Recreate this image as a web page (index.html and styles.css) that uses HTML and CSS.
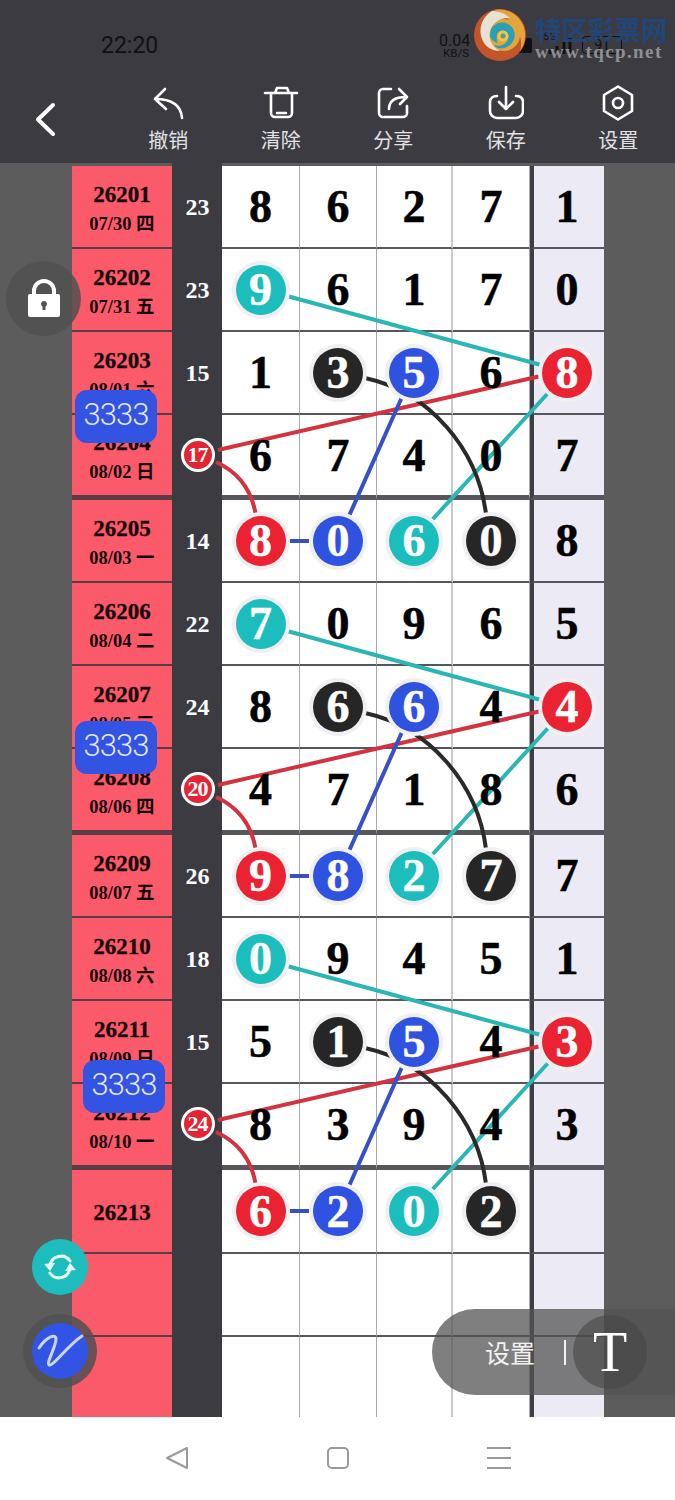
FILE: index.html
```html
<!DOCTYPE html>
<html>
<head>
    <title>走势图</title>
    <link rel="stylesheet" href="styles.css">
</head>
<body>
<div class="screen">
    <!-- status bar + toolbar -->
    <header class="top">
        <div class="status">
            <span class="time">22:20</span>
            <span class="speed">0.04<small>KB/S</small></span>
            <span class="hd"></span>
            <span class="net">5G</span>
            <svg class="bars" viewBox="0 0 24 16"><path d="M2 16V11M9 16V8M16 16V4M22 16V0"/></svg>
            <span class="battery">91</span>
        </div>
        <nav class="toolbar">
            <svg class="back" viewBox="0 0 24 36"><path d="M20 4L5 18.500L20 33"/></svg>
            <div class="tool">
                <svg viewBox="0 0 36 36"><path d="M5 14L15 4M5 14L16 24M5 14C22 14 31 20 32 33"/></svg>
                <span>撤销</span>
            </div>
            <div class="tool">
                <svg viewBox="0 0 36 36"><path d="M2 8H34M12 8L14 3H24L26 8M8 8V28a4 4 0 0 0 4 4H25a4 4 0 0 0 4-4V8M14 28H23"/></svg>
                <span>清除</span>
            </div>
            <div class="tool">
                <svg viewBox="0 0 36 36"><path d="M16 4H8a4 4 0 0 0-4 4V28a4 4 0 0 0 4 4H28a4 4 0 0 0 4-4V21M14 24C14 16 19 12 31 12M24 4L32 12L25 19"/></svg>
                <span>分享</span>
            </div>
            <div class="tool">
                <svg viewBox="0 0 36 36"><path d="M9 11C5 11 2 13 2 17V26a7 7 0 0 0 7 7H28a7 7 0 0 0 7-7V17C35 13 32 11 28 11M18 2V23M11 17L18 24L25 17"/></svg>
                <span>保存</span>
            </div>
            <div class="tool">
                <svg viewBox="0 0 36 36"><path d="M18 1.500L32 10V26L18 34.500L4 26V10Z"/><circle cx="18" cy="18" r="5"/></svg>
                <span>设置</span>
            </div>
        </nav>
    </header>

    <!-- site watermark -->
    <div class="mark">
        <svg class="mark-logo" viewBox="0 0 52 52">
            <circle cx="26" cy="26" r="26" fill="#c4552b"/>
            <circle cx="30" cy="26" r="16" fill="#e2a63a"/>
            <path d="M20 1A26 26 0 0 1 46 42C50 30 44 12 20 1Z" fill="#e5a53a"/>
            <path d="M18 2C8 8 4 20 8 30C11 38 18 42 26 42C18 38 14 30 16 22C18 14 26 8 36 9C30 4 24 2 18 2Z" fill="#e9e2d2"/>
            <path d="M16 26C16 16 26 11 34 15C42 19 43 30 36 36C30 41 22 40 20 36C26 38 32 36 34 30C36 24 30 20 26 22C22 24 22 30 24 34C20 33 16 30 16 26Z" fill="#2a9fb8"/>
            <circle cx="29" cy="27" r="5.500" fill="#e8c84a"/>
            <circle cx="29" cy="27" r="2.500" fill="#7a8a8a"/>
        </svg>
        <div class="mark-text">
            <b>特区彩票网</b>
            <span>www.tqcp.net</span>
        </div>
    </div>

    <!-- the chart -->
    <main class="board">
        <div class="row">
            <div class="issue"><b>26201</b><small>07/30 四</small></div>
            <div class="sum">23</div>
            <div class="cell"><span>8</span></div><div class="cell"><span>6</span></div><div class="cell"><span>2</span></div><div class="cell"><span>7</span></div>
            <div class="cell tail"><span>1</span></div>
        </div>
        <div class="row">
            <div class="issue"><b>26202</b><small>07/31 五</small></div>
            <div class="sum">23</div>
            <div class="cell"><i class="ball teal">9</i></div><div class="cell"><span>6</span></div><div class="cell"><span>1</span></div><div class="cell"><span>7</span></div>
            <div class="cell tail"><span>0</span></div>
        </div>
        <div class="row">
            <div class="issue"><b>26203</b><small>08/01 六</small></div>
            <div class="sum">15</div>
            <div class="cell"><span>1</span></div><div class="cell"><i class="ball black">3</i></div><div class="cell"><i class="ball blue">5</i></div><div class="cell"><span>6</span></div>
            <div class="cell tail"><i class="ball red">8</i></div>
        </div>
        <div class="row end first">
            <div class="issue"><b>26204</b><small>08/02 日</small></div>
            <div class="sum"><i class="tiny">17</i></div>
            <div class="cell"><span>6</span></div><div class="cell"><span>7</span></div><div class="cell"><span>4</span></div><div class="cell"><span>0</span></div>
            <div class="cell tail"><span>7</span></div>
        </div>

        <div class="row">
            <div class="issue"><b>26205</b><small>08/03 一</small></div>
            <div class="sum">14</div>
            <div class="cell"><i class="ball red">8</i></div><div class="cell"><i class="ball blue">0</i></div><div class="cell"><i class="ball teal">6</i></div><div class="cell"><i class="ball black">0</i></div>
            <div class="cell tail"><span>8</span></div>
        </div>
        <div class="row">
            <div class="issue"><b>26206</b><small>08/04 二</small></div>
            <div class="sum">22</div>
            <div class="cell"><i class="ball teal">7</i></div><div class="cell"><span>0</span></div><div class="cell"><span>9</span></div><div class="cell"><span>6</span></div>
            <div class="cell tail"><span>5</span></div>
        </div>
        <div class="row">
            <div class="issue"><b>26207</b><small>08/05 三</small></div>
            <div class="sum">24</div>
            <div class="cell"><span>8</span></div><div class="cell"><i class="ball black">6</i></div><div class="cell"><i class="ball blue">6</i></div><div class="cell"><span>4</span></div>
            <div class="cell tail"><i class="ball red">4</i></div>
        </div>
        <div class="row end">
            <div class="issue"><b>26208</b><small>08/06 四</small></div>
            <div class="sum"><i class="tiny">20</i></div>
            <div class="cell"><span>4</span></div><div class="cell"><span>7</span></div><div class="cell"><span>1</span></div><div class="cell"><span>8</span></div>
            <div class="cell tail"><span>6</span></div>
        </div>

        <div class="row">
            <div class="issue"><b>26209</b><small>08/07 五</small></div>
            <div class="sum">26</div>
            <div class="cell"><i class="ball red">9</i></div><div class="cell"><i class="ball blue">8</i></div><div class="cell"><i class="ball teal">2</i></div><div class="cell"><i class="ball black">7</i></div>
            <div class="cell tail"><span>7</span></div>
        </div>
        <div class="row">
            <div class="issue"><b>26210</b><small>08/08 六</small></div>
            <div class="sum">18</div>
            <div class="cell"><i class="ball teal">0</i></div><div class="cell"><span>9</span></div><div class="cell"><span>4</span></div><div class="cell"><span>5</span></div>
            <div class="cell tail"><span>1</span></div>
        </div>
        <div class="row">
            <div class="issue"><b>26211</b><small>08/09 日</small></div>
            <div class="sum">15</div>
            <div class="cell"><span>5</span></div><div class="cell"><i class="ball black">1</i></div><div class="cell"><i class="ball blue">5</i></div><div class="cell"><span>4</span></div>
            <div class="cell tail"><i class="ball red">3</i></div>
        </div>
        <div class="row end">
            <div class="issue"><b>26212</b><small>08/10 一</small></div>
            <div class="sum"><i class="tiny">24</i></div>
            <div class="cell"><span>8</span></div><div class="cell"><span>3</span></div><div class="cell"><span>9</span></div><div class="cell"><span>4</span></div>
            <div class="cell tail"><span>3</span></div>
        </div>

        <div class="row tall">
            <div class="issue"><b>26213</b></div>
            <div class="sum"></div>
            <div class="cell"><i class="ball red">6</i></div><div class="cell"><i class="ball blue">2</i></div><div class="cell"><i class="ball teal">0</i></div><div class="cell"><i class="ball black">2</i></div>
            <div class="cell tail"></div>
        </div>
        <div class="row">
            <div class="issue"></div>
            <div class="sum"></div>
            <div class="cell"></div><div class="cell"></div><div class="cell"></div><div class="cell"></div>
            <div class="cell tail"></div>
        </div>
        <div class="row last">
            <div class="issue"></div>
            <div class="sum"></div>
            <div class="cell"></div><div class="cell"></div><div class="cell"></div><div class="cell"></div>
            <div class="cell tail"></div>
        </div>

        <!-- links between balls, same shape for every block -->
        <svg class="links" viewBox="0 163 675 1254">
            <defs>
                <g id="block">
                    <path class="l-teal" d="M287 296L541 365M549 392L432 520"/>
                    <path class="l-red" d="M218 450L541 376M216 462C238 472 252 490 256 516"/>
                    <path class="l-black" d="M365 378C430 392 478 450 486 514"/>
                    <path class="l-blue" d="M402 397L349 516M289 541H309"/>
                </g>
            </defs>
            <use href="#block"/>
            <use href="#block" y="335"/>
            <use href="#block" y="670"/>
        </svg>
    </main>

    <footer class="navbar">
        <div class="nav-item"><svg viewBox="0 0 24 24"><path d="M22 2V22L2 12Z"/></svg></div>
        <div class="nav-item"><svg viewBox="0 0 24 24"><rect x="2" y="2" width="20" height="20" rx="4"/></svg></div>
        <div class="nav-item"><svg viewBox="0 0 24 24"><path d="M0 2H24M0 12H24M0 22H24"/></svg></div>
    </footer>

    <!-- floating stuff over the chart -->
    <div class="badge b1">3333</div>
    <div class="badge b2">3333</div>
    <div class="badge b3">3333</div>

    <div class="lock">
        <svg viewBox="0 0 34 40"><path class="shackle" d="M7 18V12a10 10 0 0 1 20 0V18"/><path class="lock-body" fill-rule="evenodd" d="M3 15H31a2 2 0 0 1 2 2V36a2 2 0 0 1-2 2H3a2 2 0 0 1-2-2V17a2 2 0 0 1 2-2ZM17 22a3 3 0 0 0-1.500 5.600V31h3V27.600A3 3 0 0 0 17 22Z"/></svg>
    </div>

    <div class="fab refresh">
        <svg viewBox="0 0 56 56"><path d="M18 27A11 11 0 0 1 38 22M38 29A11 11 0 0 1 18 34"/><path class="head" d="M12 25L23 24L18 32ZM44 31L33 32L38 24Z"/></svg>
    </div>
    <div class="pen-ring">
        <div class="fab pen">
            <svg viewBox="0 0 56 56"><path d="M7 25C14 14 24 10 24 16C24 24 14 40 17 42C21 44 36 22 50 13"/></svg>
        </div>
    </div>

    <div class="pill">
        <span class="pill-label">设置</span>
        <i class="pill-sep"></i>
        <span class="pill-t">T</span>
    </div>
</div>
</body>
</html>
```
FILE: styles.css
```css
* {
    box-sizing: border-box;
}
body {
    margin: 0;
    font-family: "Liberation Serif", serif;
}
.screen {
    position: relative;
    width: 675px;
    height: 1500px;
    overflow: hidden;
    display: flex;
    flex-direction: column;
    background-color: #fff;
}

/* header */
.top {
    height: 163px;
    background-color: #3c3b42;
    font-family: Roboto, sans-serif;
}
.status {
    height: 84px;
    padding-top: 33px;
    padding-left: 101px;
    display: flex;
    align-items: flex-start;
    color: #111;
}
.time {
    font-size: 23px;
    line-height: 26px;
    width: 338px;
}
.speed {
    font-size: 16px;
    line-height: 13px;
    width: 79px;
    padding-top: 1px;
}
.speed small {
    display: block;
    font-size: 11.500px;
    line-height: 12px;
    padding-left: 4px;
}
.hd {
    width: 14px;
    height: 15px;
    margin: 5px 11px 0 0;
    background-color: #111;
    border-radius: 2px;
}
.net {
    width: 16px;
    margin-top: -3px;
    font-size: 11px;
}
.bars {
    width: 24px;
    height: 16px;
    margin: 5px 0 0 -11px;
    fill: none;
    stroke: #111;
    stroke-width: 3;
}
.battery {
    width: 40px;
    height: 18px;
    margin: 3px 0 0 10px;
    border: 1px solid #111;
    border-radius: 4px;
    font-size: 14px;
    line-height: 16px;
    text-align: center;
}
.toolbar {
    position: relative;
    display: flex;
    padding-left: 112px;
}
.back {
    position: absolute;
    left: 33px;
    top: 17px;
    width: 24px;
    height: 36px;
    fill: none;
    stroke: #fff;
    stroke-width: 4;
    stroke-linecap: round;
    stroke-linejoin: round;
}
.tool {
    width: 112.500px;
    display: flex;
    flex-direction: column;
    align-items: center;
    color: #e2e2e2;
    font-family: "Noto Sans CJK SC", sans-serif;
    font-size: 20px;
    line-height: 24px;
}
.tool svg {
    width: 36px;
    height: 36px;
    margin-top: 1px;
    margin-bottom: 7px;
    fill: none;
    stroke: #fff;
    stroke-width: 2.600;
    stroke-linecap: round;
    stroke-linejoin: round;
}

/* watermark */
.mark {
    position: absolute;
    left: 474px;
    top: 9px;
    display: flex;
    gap: 9px;
}
.mark-logo {
    width: 52px;
    height: 52px;
}
.mark-text b {
    display: block;
    margin-top: 6px;
    font-family: "Noto Sans CJK SC", sans-serif;
    font-size: 26.500px;
    line-height: 28px;
    color: rgba(30, 72, 128, 0.9);
}
.mark-text span {
    display: block;
    font-size: 19px;
    line-height: 18px;
    font-weight: bold;
    letter-spacing: 1.400px;
    color: #8f8f92;
    white-space: nowrap;
}

/* chart */
.board {
    position: relative;
    flex: 1;
    padding-top: 3px;
    background: linear-gradient(90deg, #5c5c5c 172px, #3c3b42 172px, #3c3b42 222px, #5c5c5c 222px);
}
.row {
    display: grid;
    grid-template-columns: 100px 50px 78px 77px 76px 77px 74px;
    height: 83px;
    margin-left: 72px;
    width: 532px;
    --line: 2px;
}
.row.end {
    height: 86px;
    --line: 5px;
}
.row.end.first {
    height: 85px;
}
.row.tall {
    height: 84px;
}
.row.last {
    height: 80px;
    --line: 0;
}
.issue {
    display: flex;
    flex-direction: column;
    align-items: center;
    justify-content: center;
    gap: 5px;
    padding-top: 3px;
    background-color: #fb5a6b;
    border-bottom: var(--line) solid #5b3b45;
    color: #16060a;
}
.issue b {
    font-size: 23px;
    line-height: 26px;
    -webkit-text-stroke: 0.3px #16060a;
}
.issue small {
    font-size: 18.500px;
    line-height: 22px;
    font-weight: bold;
    font-family: "Liberation Serif", "Noto Sans CJK SC", serif;
}
.sum {
    display: flex;
    align-items: center;
    justify-content: center;
    padding-left: 1px;
    color: #fff;
    font-size: 24px;
    font-weight: bold;
}
.cell {
    display: flex;
    align-items: center;
    justify-content: center;
    background-color: #fff;
    border-bottom: var(--line) solid #56565c;
    border-right: 1px solid #aaa;
    color: #000;
    font-size: 46px;
    font-weight: bold;
    -webkit-text-stroke: 0.5px currentColor;
}
.cell:nth-child(5) {
    border-right: 2px solid #c9c9c9;
}
.cell span {
    position: relative;
    z-index: 2;
}
.cell.tail {
    padding-right: 4px;
    background-color: #ecebf5;
    border-left: 4px solid #3f3e45;
    border-right: none;
}
.ball {
    position: relative;
    z-index: 2;
    width: 50px;
    height: 50px;
    flex: none;
    display: flex;
    align-items: center;
    justify-content: center;
    border-radius: 50%;
    box-shadow: 0 0 0 4px #f0f0f2;
    color: #fff;
    font-style: normal;
}
.teal { background-color: #1bbdbd; }
.red { background-color: #ea2232; }
.blue { background-color: #2f52e0; }
.black { background-color: #262626; }
.tiny {
    position: relative;
    z-index: 2;
    width: 34px;
    height: 34px;
    margin-bottom: 6px;
    display: flex;
    align-items: center;
    justify-content: center;
    border-radius: 50%;
    border: 3px solid #fff;
    background-color: #e32433;
    font-size: 22px;
    font-style: normal;
    letter-spacing: -1px;
}
.links {
    position: absolute;
    left: 0;
    top: 0;
    width: 675px;
    height: 1254px;
    z-index: 1;
    fill: none;
    stroke-width: 4;
}
.l-teal { stroke: #2bb6b6; }
.l-red { stroke: #d2333f; }
.l-black { stroke: #2a2a2a; }
.l-blue { stroke: #3750c8; }

/* bottom nav */
.navbar {
    height: 83px;
    display: flex;
    justify-content: center;
    padding-top: 29px;
    background-color: #fff;
}
.nav-item {
    width: 161px;
    text-align: center;
}
.nav-item svg {
    width: 24px;
    height: 24px;
    fill: none;
    stroke: #9a9a9a;
    stroke-width: 2;
    stroke-linejoin: round;
}

/* floating */
.badge {
    position: absolute;
    z-index: 3;
    width: 82px;
    height: 53px;
    border-radius: 12px;
    background-color: #3353e2;
    color: #e4eaff;
    font-family: Roboto, sans-serif;
    font-weight: 300;
    font-size: 31px;
    line-height: 50px;
    letter-spacing: -1px;
    text-align: center;
}
.b1 { left: 75px; top: 390px; }
.b2 { left: 75px; top: 721px; }
.b3 { left: 83px; top: 1060px; }
.lock {
    position: absolute;
    z-index: 3;
    left: 6px;
    top: 261px;
    width: 75px;
    height: 75px;
    display: flex;
    align-items: center;
    justify-content: center;
    border-radius: 50%;
    background-color: rgba(80, 80, 80, 0.85);
}
.lock svg {
    width: 34px;
    height: 40px;
}
.shackle {
    fill: none;
    stroke: #fff;
    stroke-width: 4;
}
.lock-body {
    fill: #fff;
}
.fab {
    width: 56px;
    height: 56px;
    border-radius: 50%;
}
.fab svg {
    display: block;
    width: 56px;
    height: 56px;
    fill: none;
    stroke: #e8fbfb;
    stroke-width: 3;
    stroke-linecap: round;
}
.refresh {
    position: absolute;
    z-index: 3;
    left: 32px;
    top: 1239px;
    background-color: #1dbdbd;
}
.refresh .head {
    fill: #e8fbfb;
    stroke: none;
}
.pen-ring {
    position: absolute;
    z-index: 3;
    left: 23px;
    top: 1314px;
    width: 74px;
    height: 74px;
    padding: 9px;
    border-radius: 50%;
    background-color: rgba(80, 80, 80, 0.85);
}
.pen {
    background-color: #3154e4;
}
.pen svg {
    stroke: #c9d5f7;
}
.pill {
    position: absolute;
    z-index: 3;
    right: 0;
    top: 1309px;
    width: 243px;
    height: 86px;
    display: flex;
    align-items: center;
    border-radius: 43px 0 0 43px;
    background-color: rgba(82, 82, 82, 0.74);
    color: #f2f2f2;
}
.pill-label {
    margin-left: 53px;
    font-family: "Noto Sans CJK SC", sans-serif;
    font-size: 25px;
}
.pill-sep {
    width: 2px;
    height: 25px;
    margin-left: 29px;
    background-color: #f2f2f2;
}
.pill-t {
    width: 74px;
    height: 74px;
    margin-left: 7px;
    border-radius: 50%;
    background-color: rgba(70, 70, 70, 0.6);
    font-size: 56px;
    line-height: 74px;
    text-align: center;
    color: #fff;
}
```
